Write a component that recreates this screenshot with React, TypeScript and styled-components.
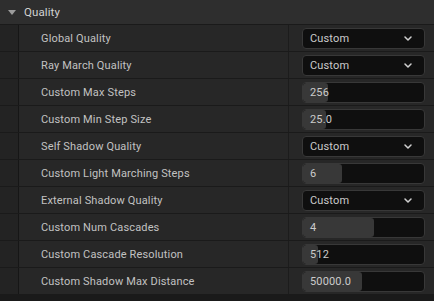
import * as React from 'react';
import styled, { createGlobalStyle } from 'styled-components';

const GlobalStyle = createGlobalStyle`
  html, body {
    margin: 0;
    padding: 0;
    background: #1a1a1a;
  }
  body {
    font-family: Roboto, "Liberation Sans", sans-serif;
    font-size: 11px;
    color: #c0c0c0;
  }
`;

const Panel = styled.div`
  width: 434px;
  height: 301px;
  overflow: hidden;
  background: #1a1a1a;
  display: flex;
  flex-direction: column;
`;

const Header = styled.div`
  height: 24px;
  border-bottom: 1px solid #1a1a1a;
  background: #2e2e2e;
  display: flex;
  align-items: center;
  padding-left: 8px;
  gap: 8px;
  color: #d2d2d2;
  font-size: 11.5px;
  letter-spacing: 0.1px;
`;

const Arrow = styled.span`
  width: 0;
  height: 0;
  border-left: 4.5px solid transparent;
  border-right: 4.5px solid transparent;
  border-top: 5px solid #9c9c9c;
  margin-top: 1px;
`;

const Row = styled.div`
  height: 26px;
  border-bottom: 1px solid #1a1a1a;
  display: grid;
  grid-template-columns: 19px 1fr 146px;
`;

const Indent = styled.div`
  background: #232323;
  border-right: 1px solid #161616;
`;

const Name = styled.div`
  background: #272727;
  display: flex;
  align-items: center;
  padding-left: 22px;
  color: #c2c2c2;
  letter-spacing: 0.15px;
  white-space: nowrap;
`;

const ValueCell = styled.div`
  background: #272727;
  border-left: 1px solid #1c1c1c;
  display: flex;
  align-items: center;
  padding-left: 13px;
`;

const Field = styled.div`
  position: relative;
  width: 123px;
  height: 21px;
  box-sizing: border-box;
  border: 1px solid #383838;
  border-radius: 4px;
  background: #0f0f0f;
  display: flex;
  align-items: center;
  justify-content: space-between;
  padding: 0 12px 0 7px;
  overflow: hidden;
  color: #cbcbcb;
  letter-spacing: 0.15px;
`;

const Fill = styled.div`
  position: absolute;
  left: 0;
  top: 0;
  bottom: 0;
  background: #383838;
  border-radius: 3px;
`;

const FieldText = styled.span`
  position: relative;
`;

type Prop =
  | { label: string; kind: 'combo'; value: string }
  | { label: string; kind: 'number'; value: string; fill: number };

const rows: Prop[] = [
  { label: 'Global Quality', kind: 'combo', value: 'Custom' },
  { label: 'Ray March Quality', kind: 'combo', value: 'Custom' },
  { label: 'Custom Max Steps', kind: 'number', value: '256', fill: 25 },
  { label: 'Custom Min Step Size', kind: 'number', value: '25.0', fill: 23 },
  { label: 'Self Shadow Quality', kind: 'combo', value: 'Custom' },
  { label: 'Custom Light Marching Steps', kind: 'number', value: '6', fill: 39 },
  { label: 'External Shadow Quality', kind: 'combo', value: 'Custom' },
  { label: 'Custom Num Cascades', kind: 'number', value: '4', fill: 71 },
  { label: 'Custom Cascade Resolution', kind: 'number', value: '512', fill: 15 },
  { label: 'Custom Shadow Max Distance', kind: 'number', value: '50000.0', fill: 59 }
];

function Chevron() {
  return (
    <svg width="8" height="5" viewBox="0 0 8 5">
      <path
        d="M1 1 L4 4 L7 1"
        fill="none"
        stroke="#d0d0d0"
        strokeWidth="1.5"
        strokeLinecap="round"
        strokeLinejoin="round"
      />
    </svg>
  );
}

function renderValue(prop: Prop) {
  if (prop.kind === 'combo') {
    return (
      <Field>
        <FieldText>{prop.value}</FieldText>
        <Chevron />
      </Field>
    );
  }

  return (
    <Field>
      <Fill style={{ width: prop.fill }} />
      <FieldText>{prop.value}</FieldText>
    </Field>
  );
}

export default function App() {
  return (
    <>
      <GlobalStyle />
      <Panel>
        <Header>
          <Arrow />
          Quality
        </Header>
        {rows.map(prop => (
          <Row key={prop.label}>
            <Indent />
            <Name>{prop.label}</Name>
            <ValueCell>{renderValue(prop)}</ValueCell>
          </Row>
        ))}
      </Panel>
    </>
  );
}
